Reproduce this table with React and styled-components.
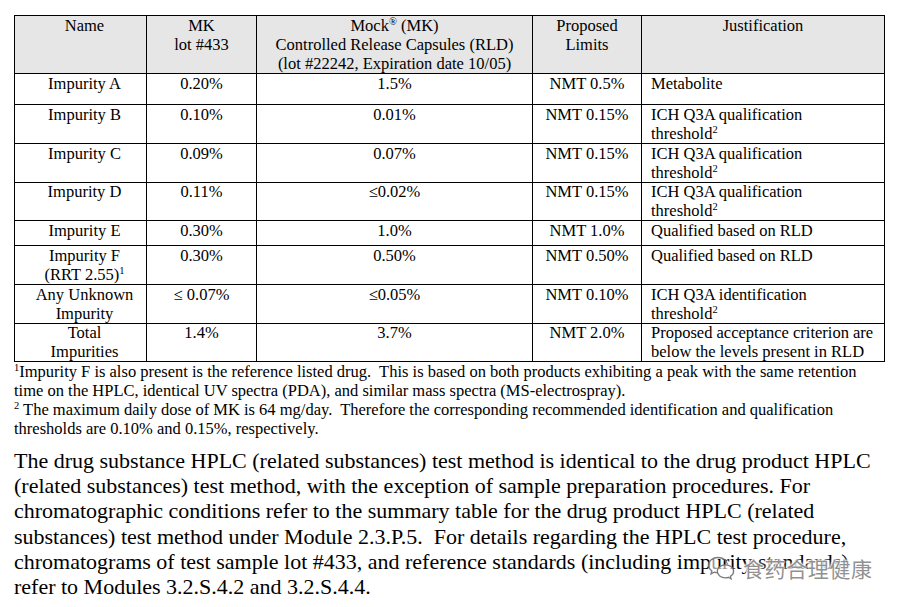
import React from 'react'
import styled, { createGlobalStyle } from 'styled-components'

const GlobalStyle = createGlobalStyle`
  html, body {
    margin: 0;
    padding: 0;
    background: #ffffff;
  }
  body {
    font-family: "Liberation Serif", "Times New Roman", serif;
    color: #000000;
  }
`

const Page = styled.div`
  position: relative;
  width: 904px;
  height: 607px;
  box-sizing: border-box;
  padding: 15px 0 0 14px;
  overflow: hidden;
`

const Table = styled.table`
  border-collapse: collapse;
  table-layout: fixed;
  width: 870px;
  font-size: 16.5px;
  line-height: 19px;
`

const HeadCell = styled.th`
  border: 1px solid #000;
  background: #e6e6e6;
  font-weight: normal;
  vertical-align: top;
  text-align: center;
  padding: 0 2px 0 ${(p) => (p.$first ? '10px' : '2px')};
`

const Cell = styled.td`
  border: 1px solid #000;
  vertical-align: top;
  text-align: ${(p) => (p.$left ? 'left' : 'center')};
  padding: 0 2px 0 ${(p) => (p.$left ? '9px' : p.$first ? '10px' : '2px')};
  line-height: ${(p) => (p.$tight ? '18.5px' : '19px')};
  white-space: nowrap;
`

const Row = styled.tr`
  height: ${(p) => p.$h}px;
`

const Sup = styled.sup`
  font-size: 10.5px;
  line-height: 0;
  vertical-align: 6px;
`

const Notes = styled.div`
  font-size: 16.5px;
  line-height: 19px;
  white-space: nowrap;
`

const Body = styled.div`
  margin-top: 10px;
  font-size: 22px;
  line-height: 25.2px;
  white-space: nowrap;
`

const Watermark = styled.div`
  position: absolute;
  left: 706px;
  top: 553px;
  display: flex;
  align-items: center;
  gap: 7px;
  color: rgba(125, 125, 125, 0.85);
  font-family: "Noto Sans CJK SC", sans-serif;
  font-size: 21px;
  letter-spacing: 0.6px;
  text-shadow: 0 0 2px #fff, 0 0 2px #fff, 0 0 3px #fff, 0 0 4px #fff;
`

const WechatMark = () => (
  <svg width="30" height="26" viewBox="0 0 30 26" fill="none" stroke="rgba(110,110,110,0.9)" strokeWidth="1.3">
    <path d="M12 2.5c-5.5 0-9.5 3.4-9.5 7.6 0 2.4 1.3 4.5 3.4 5.9l-0.9 2.8 3.2-1.7c1.2 0.4 2.4 0.6 3.8 0.6" fill="rgba(255,255,255,0.6)" />
    <path d="M12 2.5c5.2 0 9.2 3 9.5 7" />
    <path d="M19.5 9.8c-4.6 0-8.2 2.9-8.2 6.5s3.6 6.5 8.2 6.5c1 0 2-0.2 2.9-0.5l2.7 1.5-0.7-2.4c1.9-1.2 3.2-3 3.2-5.1 0-3.6-3.6-6.5-8.1-6.5z" fill="rgba(255,255,255,0.6)" />
  </svg>
)

const rows = [
  { h: 31, name: 'Impurity A', mk: '0.20%', mock: '1.5%', limit: 'NMT 0.5%', just: ['Metabolite'] },
  { h: 39, name: 'Impurity B', mk: '0.10%', mock: '0.01%', limit: 'NMT 0.15%', just: ['ICH Q3A qualification', 'threshold'], sup: true },
  { h: 39, name: 'Impurity C', mk: '0.09%', mock: '0.07%', limit: 'NMT 0.15%', just: ['ICH Q3A qualification', 'threshold'], sup: true },
  { h: 38, tight: true, name: 'Impurity D', mk: '0.11%', mock: '≤0.02%', limit: 'NMT 0.15%', just: ['ICH Q3A qualification', 'threshold'], sup: true },
  { h: 25, name: 'Impurity E', mk: '0.30%', mock: '1.0%', limit: 'NMT 1.0%', just: ['Qualified based on RLD'] },
  { h: 39, name: 'Impurity F', name2: '(RRT 2.55)', mk: '0.30%', mock: '0.50%', limit: 'NMT 0.50%', just: ['Qualified based on RLD'] },
  { h: 39, name: 'Any Unknown', name2: 'Impurity', mk: '≤ 0.07%', mock: '≤0.05%', limit: 'NMT 0.10%', just: ['ICH Q3A identification', 'threshold'], sup: true },
  { h: 38, tight: true, name: 'Total', name2: 'Impurities', mk: '1.4%', mock: '3.7%', limit: 'NMT 2.0%', just: ['Proposed acceptance criterion are', 'below the levels present in RLD'] },
]

export default function App() {
  return (
    <Page>
      <GlobalStyle />
      <Table>
        <colgroup>
          <col style={{ width: 132 }} />
          <col style={{ width: 110 }} />
          <col style={{ width: 276 }} />
          <col style={{ width: 109 }} />
          <col style={{ width: 243 }} />
        </colgroup>
        <thead>
          <Row $h={58}>
            <HeadCell $first>Name</HeadCell>
            <HeadCell>MK<br />lot #433</HeadCell>
            <HeadCell>
              Mock<Sup>®</Sup> (MK)<br />
              Controlled Release Capsules (RLD)<br />
              (lot #22242, Expiration date 10/05)
            </HeadCell>
            <HeadCell>Proposed<br />Limits</HeadCell>
            <HeadCell>Justification</HeadCell>
          </Row>
        </thead>
        <tbody>
          {rows.map((r) => (
            <Row key={r.name} $h={r.h}>
              <Cell $first $tight={r.tight}>
                {r.name}
                {r.name2 && <br />}
                {r.name2}
                {r.name === 'Impurity F' && <Sup>1</Sup>}
              </Cell>
              <Cell $tight={r.tight}>{r.mk}</Cell>
              <Cell $tight={r.tight}>{r.mock}</Cell>
              <Cell $tight={r.tight}>{r.limit}</Cell>
              <Cell $left $tight={r.tight}>
                {r.just[0]}
                {r.just[1] && <br />}
                {r.just[1]}
                {r.sup && <Sup>2</Sup>}
              </Cell>
            </Row>
          ))}
        </tbody>
      </Table>
      <Notes>
        <Sup>1</Sup>Impurity F is also present is the reference listed drug.&nbsp; This is based on both products exhibiting a peak with the same retention<br />
        time on the HPLC, identical UV spectra (PDA), and similar mass spectra (MS-electrospray).<br />
        <Sup>2</Sup> The maximum daily dose of MK is 64 mg/day.&nbsp; Therefore the corresponding recommended identification and qualification<br />
        thresholds are 0.10% and 0.15%, respectively.
      </Notes>
      <Body>
        The drug substance HPLC (related substances) test method is identical to the drug product HPLC<br />
        (related substances) test method, with the exception of sample preparation procedures. For<br />
        chromatographic conditions refer to the summary table for the drug product HPLC (related<br />
        substances) test method under Module 2.3.P.5.&nbsp; For details regarding the HPLC test procedure,<br />
        chromatograms of test sample lot #433, and reference standards (including impurity standards)<br />
        refer to Modules 3.2.S.4.2 and 3.2.S.4.4.
      </Body>
      <Watermark>
        <WechatMark />
        <span>食药合理健康</span>
      </Watermark>
    </Page>
  )
}
